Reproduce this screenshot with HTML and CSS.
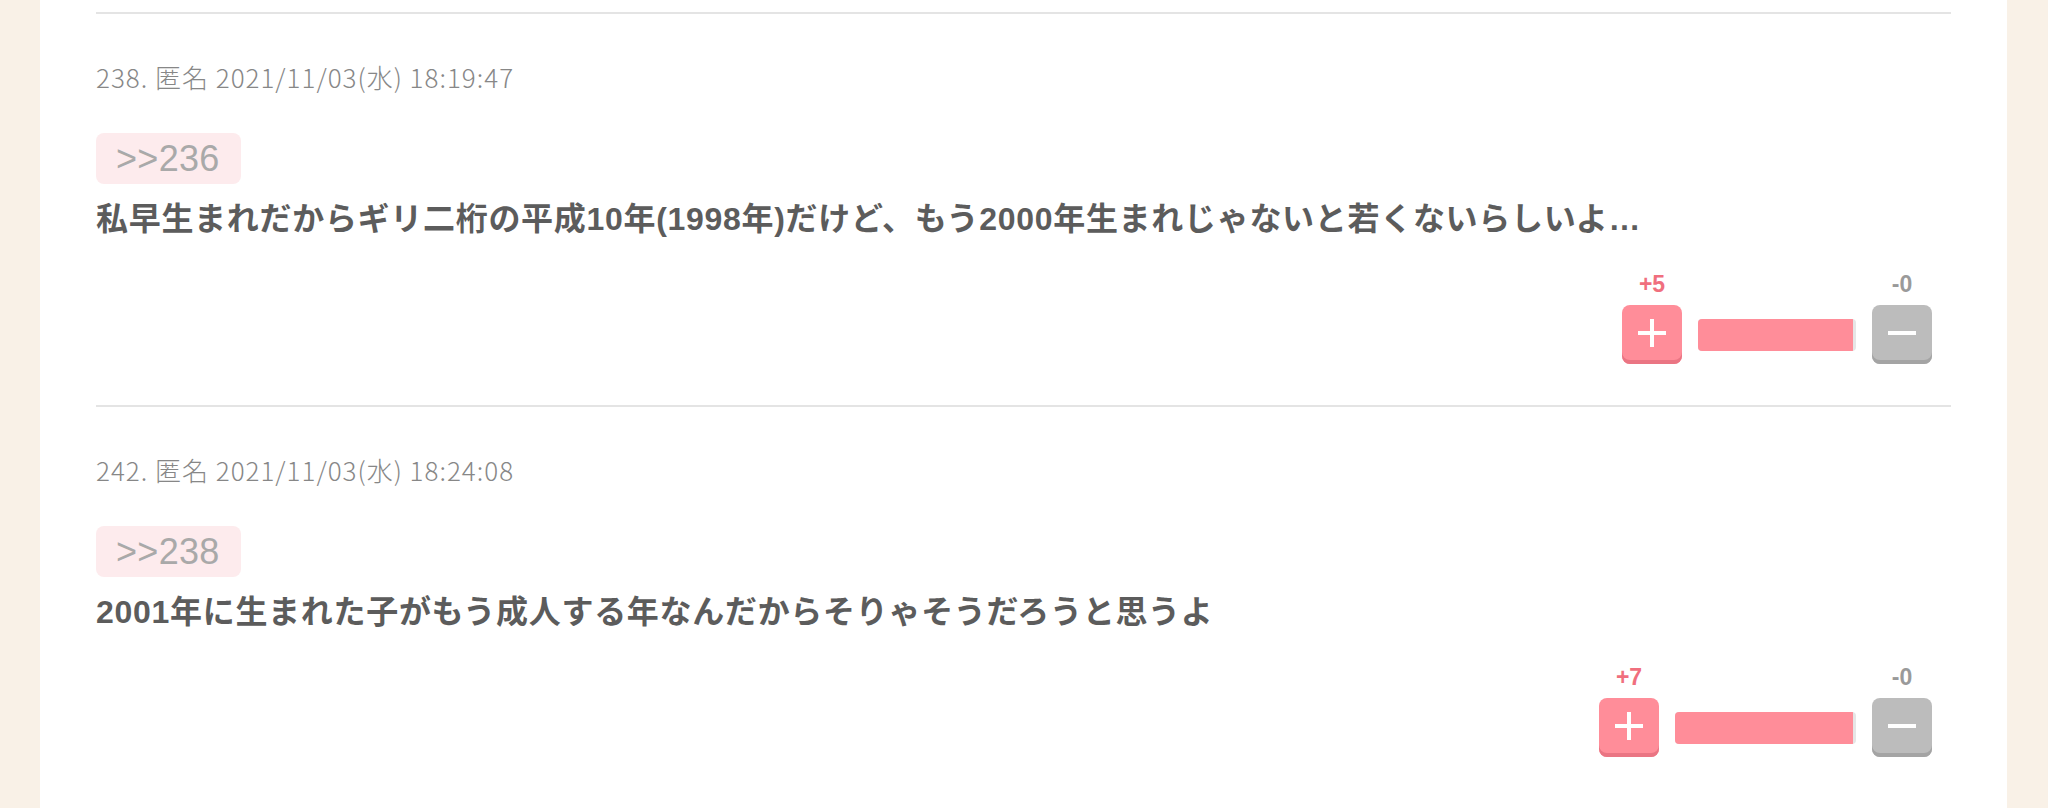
FILE: index.html
```html
<!DOCTYPE html>
<html lang="ja">
<head>
<meta charset="utf-8">
<title>コメント</title>
<link rel="stylesheet" href="styles.css">
</head>
<body>
<main class="panel">
  <article class="comment">
    <div class="meta">238. 匿名 2021/11/03(水) 18:19:47</div>
    <div class="anchor">&gt;&gt;236</div>
    <p class="text">私早生まれだからギリ二桁の平成10年(1998年)だけど、もう2000年生まれじゃないと若くないらしいよ…</p>
    <div class="vote">
      <span class="count count-plus">+5</span>
      <span class="count count-minus">-0</span>
      <button class="btn btn-plus" aria-label="プラス">
        <svg width="28" height="28" viewBox="0 0 28 28"><rect x="12" y="0" width="4" height="28" fill="#fff"/><rect x="0" y="12" width="28" height="4" fill="#fff"/></svg>
      </button>
      <div class="bar" style="width:158px"><div class="fill"></div></div>
      <button class="btn btn-minus" aria-label="マイナス">
        <svg width="28" height="28" viewBox="0 0 28 28"><rect x="0" y="12" width="28" height="4" fill="#fff"/></svg>
      </button>
    </div>
  </article>
  <article class="comment">
    <div class="meta">242. 匿名 2021/11/03(水) 18:24:08</div>
    <div class="anchor">&gt;&gt;238</div>
    <p class="text">2001年に生まれた子がもう成人する年なんだからそりゃそうだろうと思うよ</p>
    <div class="vote">
      <span class="count count-plus">+7</span>
      <span class="count count-minus">-0</span>
      <button class="btn btn-plus" aria-label="プラス">
        <svg width="28" height="28" viewBox="0 0 28 28"><rect x="12" y="0" width="4" height="28" fill="#fff"/><rect x="0" y="12" width="28" height="4" fill="#fff"/></svg>
      </button>
      <div class="bar" style="width:181px"><div class="fill"></div></div>
      <button class="btn btn-minus" aria-label="マイナス">
        <svg width="28" height="28" viewBox="0 0 28 28"><rect x="0" y="12" width="28" height="4" fill="#fff"/></svg>
      </button>
    </div>
  </article>
</main>
</body>
</html>
```
FILE: styles.css
```css
html, body {
  margin: 0;
  padding: 0;
}
body {
  background: #f9f1e7;
  height: 808px;
  overflow: hidden;
  font-family: "Noto Sans CJK JP", "Noto Sans", sans-serif;
}
.panel {
  margin: 0 41px 0 40px;
  background: #fff;
  padding: 12px 56px 0 56px;
  min-height: 808px;
  box-sizing: border-box;
}
.comment {
  border-top: 2px solid #e4e4e4;
  padding: 47px 0 41px 0;
}
.meta {
  font-size: 26px;
  line-height: 32px;
  font-weight: 300;
  letter-spacing: 1px;
  color: #878787;
}
.anchor {
  display: inline-block;
  margin-top: 40px;
  height: 51px;
  line-height: 51px;
  padding: 0 21px 0 20px;
  background: #fdebed;
  border-radius: 8px;
  color: #a9a9a9;
  font-family: "Liberation Sans", Arial, sans-serif;
  font-size: 36px;
  font-weight: 400;
  letter-spacing: 0.3px;
}
.text {
  margin: 11px 0 0 0;
  font-family: "Liberation Sans", "Noto Sans CJK JP", sans-serif;
  font-size: 32px;
  line-height: 48px;
  font-weight: 700;
  letter-spacing: 0.7px;
  color: #5c5c5c;
}
.vote {
  margin-top: 29px;
  display: grid;
  grid-template-columns: 60px auto 60px;
  grid-template-rows: 24px 59px;
  column-gap: 16px;
  row-gap: 9px;
  justify-content: end;
  align-items: center;
  padding-right: 19px;
}
.count {
  font-family: "Liberation Sans", Arial, sans-serif;
  font-weight: 700;
  font-size: 23px;
  line-height: 24px;
  text-align: center;
  grid-row: 1;
}
.count-plus {
  grid-column: 1;
  color: #f06f7e;
}
.count-minus {
  grid-column: 3;
  color: #9a9a9a;
}
.btn {
  grid-row: 2;
  width: 60px;
  height: 59px;
  border: 0;
  border-radius: 8px;
  padding: 0 0 4px 0;
  display: flex;
  align-items: center;
  justify-content: center;
  cursor: pointer;
}
.btn-plus {
  grid-column: 1;
  background: #ff8d99;
  box-shadow: inset 0 -4px 0 #ea7583;
}
.btn-minus {
  grid-column: 3;
  background: #bcbcbc;
  box-shadow: inset 0 -4px 0 #a4a4a4;
}
.bar {
  grid-row: 2;
  grid-column: 2;
  height: 32px;
  background: #e6e6e6;
  border-radius: 4px;
  overflow: hidden;
}
.fill {
  width: calc(100% - 3px);
  height: 100%;
  background: #ff8d99;
}
```
